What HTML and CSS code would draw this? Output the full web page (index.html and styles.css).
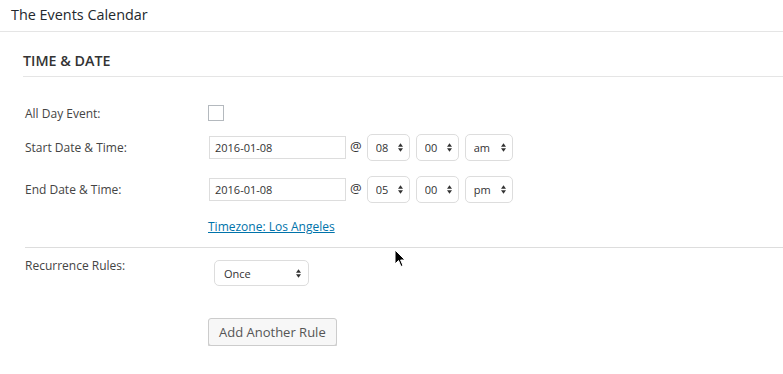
FILE: index.html
```html
<!DOCTYPE html>
<html lang="en">
<head>
    <meta charset="UTF-8">
    <meta name="viewport" content="width=device-width, initial-scale=1.0">
    <title>The Events Calendar</title>
    <link rel="stylesheet" href="styles.css">
</head>
<body>
    <div class="topbar">The Events Calendar</div>

    <div class="section">
        <h2>TIME &amp; DATE</h2>

        <div class="row row-allday">
            <label class="label">All Day Event:</label>
            <div class="field"><input type="checkbox" class="check"></div>
        </div>

        <div class="row">
            <label class="label">Start Date &amp; Time:</label>
            <div class="field">
                <input type="text" class="date" value="2016-01-08">
                <span class="at">@</span>
                <span class="select w-hour"><select><option>08</option></select><svg viewBox="0 0 6 10"><path d="M3 0L6 4H0Z M3 10L6 6H0Z"/></svg></span>
                <span class="select w-hour"><select><option>00</option></select><svg viewBox="0 0 6 10"><path d="M3 0L6 4H0Z M3 10L6 6H0Z"/></svg></span>
                <span class="select w-mer"><select><option>am</option></select><svg viewBox="0 0 6 10"><path d="M3 0L6 4H0Z M3 10L6 6H0Z"/></svg></span>
            </div>
        </div>

        <div class="row row-end">
            <label class="label">End Date &amp; Time:</label>
            <div class="field">
                <input type="text" class="date" value="2016-01-08">
                <span class="at">@</span>
                <span class="select w-hour"><select><option>05</option></select><svg viewBox="0 0 6 10"><path d="M3 0L6 4H0Z M3 10L6 6H0Z"/></svg></span>
                <span class="select w-hour"><select><option>00</option></select><svg viewBox="0 0 6 10"><path d="M3 0L6 4H0Z M3 10L6 6H0Z"/></svg></span>
                <span class="select w-mer"><select><option>pm</option></select><svg viewBox="0 0 6 10"><path d="M3 0L6 4H0Z M3 10L6 6H0Z"/></svg></span>
            </div>
        </div>

        <div class="row row-tz">
            <div class="label"></div>
            <div class="field"><a href="#" class="tz">Timezone: Los Angeles</a></div>
        </div>

        <div class="recurrence">
            <div class="row row-rec">
                <label class="label">Recurrence Rules:</label>
                <div class="field">
                    <span class="select w-once"><select><option>Once</option></select><svg viewBox="0 0 6 10"><path d="M3 0L6 4H0Z M3 10L6 6H0Z"/></svg></span>
                    <button class="btn">Add Another Rule</button>
                </div>
            </div>
        </div>
    </div>

    <svg class="cursor" viewBox="0 0 12 19" width="12" height="19">
        <path d="M1 1V15L4.5 11.5L7 17.5L9 16.6L6.6 11H11Z" fill="#000" stroke="#fff" stroke-width="1"/>
    </svg>
</body>
</html>
```

FILE: styles.css
```css
body {
    font-family: 'Open Sans', sans-serif;
    background-color: #fff;
    color: #444;
    margin: 0;
    padding: 0;
}

.topbar {
    height: 31px;
    line-height: 30px;
    padding-left: 11px;
    font-size: 14.4px;
    color: #23282d;
    border-bottom: 1px solid #e5e5e5;
}

.section {
    padding-left: 23px;
}

.section h2 {
    margin: 19px 0 0 0;
    padding-bottom: 5px;
    font-size: 14.3px;
    font-weight: 600;
    line-height: 20px;
    color: #333;
    border-bottom: 1px solid #e5e5e5;
}

.row {
    display: flex;
    align-items: center;
    height: 35px;
}

.label {
    width: 183px;
    padding-left: 2px;
    flex-shrink: 0;
    font-size: 12px;
    color: #444;
}

.field {
    display: flex;
    align-items: center;
}

.row-allday {
    margin-top: 19px;
    height: 34px;
}

.check {
    -webkit-appearance: none;
    appearance: none;
    width: 16px;
    height: 16px;
    margin: 0;
    border: 1px solid #b4b9be;
    background: #fff;
}

.row-end {
    margin-top: 7px;
}

.date {
    width: 137px;
    height: 23px;
    box-sizing: border-box;
    margin: 0 0 0 1px;
    padding: 0 5px;
    border: 1px solid #ddd;
    font-family: 'Open Sans', sans-serif;
    font-size: 11px;
    color: #333;
}

.at {
    font-size: 13px;
    line-height: 16px;
    color: #333;
    margin: -4px 5px 0 4px;
}

.select {
    position: relative;
    display: inline-block;
    margin-right: 6px;
}

.select select {
    -webkit-appearance: none;
    appearance: none;
    height: 27px;
    width: 100%;
    box-sizing: border-box;
    margin: 0;
    padding: 0 0 0 8px;
    border: 1px solid #ddd;
    border-radius: 5px;
    background: #fff;
    font-family: 'Open Sans', sans-serif;
    font-size: 11px;
    color: #333;
    display: block;
}

.select svg {
    position: absolute;
    right: 7px;
    top: 9px;
    width: 5px;
    height: 9px;
    fill: #333;
    pointer-events: none;
}

.w-hour {
    width: 43px;
}

.w-mer {
    width: 48px;
}

.w-once {
    width: 95px;
    margin-left: 6px;
}

.w-once select {
    height: 26px;
    padding-left: 9px;
}

.w-once svg {
    right: 8px;
}

.row-tz {
    margin-top: 8px;
    height: 22px;
}

.tz {
    font-size: 12px;
    color: #0073aa;
    text-decoration: underline;
}

.recurrence {
    margin-top: 10px;
    margin-left: 2px;
    border-top: 1px solid #ddd;
}

.row-rec {
    align-items: flex-start;
    height: auto;
    padding-top: 9px;
}

.row-rec .label {
    padding-left: 0;
    line-height: 18px;
}

.row-rec .field {
    flex-direction: column;
    align-items: flex-start;
    padding-top: 3px;
}

.btn {
    margin-top: 32px;
    height: 28px;
    padding: 0 10px;
    border: 1px solid #ccc;
    border-radius: 3px;
    background-color: #f7f7f7;
    box-shadow: 0 1px 0 #ccc;
    font-family: 'Open Sans', sans-serif;
    font-size: 13px;
    color: #555;
    cursor: pointer;
}

.cursor {
    position: absolute;
    left: 394px;
    top: 249px;
}
```
